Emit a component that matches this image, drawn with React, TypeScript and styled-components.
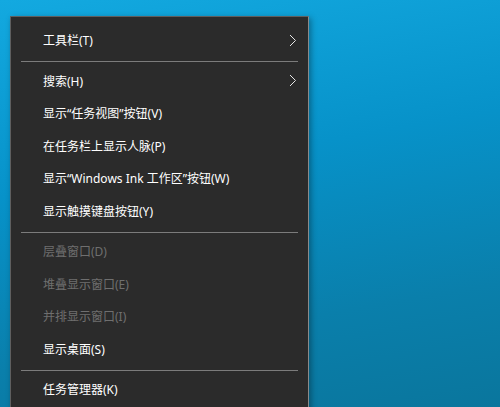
import React from "react";
import styled, { createGlobalStyle } from "styled-components";

const GlobalStyle = createGlobalStyle`
  html, body {
    margin: 0;
    padding: 0;
  }
  body {
    font-family: "Noto Sans", "Noto Sans CJK SC", sans-serif;
  }
`;

const Desktop = styled.div`
  width: 500px;
  height: 407px;
  overflow: hidden;
  box-sizing: border-box;
  padding: 16px 0 0 10px;
  background: linear-gradient(170deg, #13a9e0 0%, #0792c9 40%, #0a7fab 75%, #0a769d 100%);
`;

const Menu = styled.div`
  width: 299px;
  box-sizing: border-box;
  background: #2b2b2b;
  border: 1px solid #5f5f5f;
  border-right-color: #8a8a8a;
  padding: 8px 0 40px;
  box-shadow: 2px 2px 6px rgba(0, 0, 0, 0.35);
`;

const Item = styled.div<{ $disabled?: boolean }>`
  height: 32.5px;
  box-sizing: border-box;
  display: flex;
  align-items: center;
  justify-content: space-between;
  padding: 0 11px 2px 32px;
  font-size: 12px;
  color: ${({ $disabled }) => ($disabled ? "#6f6f6f" : "#ffffff")};
  white-space: nowrap;
`;

const Separator = styled.div`
  height: 8px;
  display: flex;
  align-items: center;
  margin: 0 10px;

  &::after {
    content: "";
    flex: 1;
    height: 1px;
    background: #7c7c7c;
  }
`;

const Chevron = () => (
  <svg width="8" height="13" viewBox="0 0 8 13" fill="none">
    <path d="M1 1 L6.5 6.5 L1 12" stroke="#e6e6e6" strokeWidth="1" />
  </svg>
);

type Entry =
  | { label: string; submenu?: boolean; disabled?: boolean }
  | "sep";

const entries: Entry[] = [
  { label: "工具栏(T)", submenu: true },
  "sep",
  { label: "搜索(H)", submenu: true },
  { label: "显示“任务视图”按钮(V)" },
  { label: "在任务栏上显示人脉(P)" },
  { label: "显示“Windows Ink 工作区”按钮(W)" },
  { label: "显示触摸键盘按钮(Y)" },
  "sep",
  { label: "层叠窗口(D)", disabled: true },
  { label: "堆叠显示窗口(E)", disabled: true },
  { label: "并排显示窗口(I)", disabled: true },
  { label: "显示桌面(S)" },
  "sep",
  { label: "任务管理器(K)" },
];

export default function App() {
  return (
    <>
      <GlobalStyle />
      <Desktop>
        <Menu>
          {entries.map((e, i) =>
            e === "sep" ? (
              <Separator key={i} />
            ) : (
              <Item key={i} $disabled={e.disabled}>
                <span>{e.label}</span>
                {e.submenu && <Chevron />}
              </Item>
            )
          )}
        </Menu>
      </Desktop>
    </>
  );
}
